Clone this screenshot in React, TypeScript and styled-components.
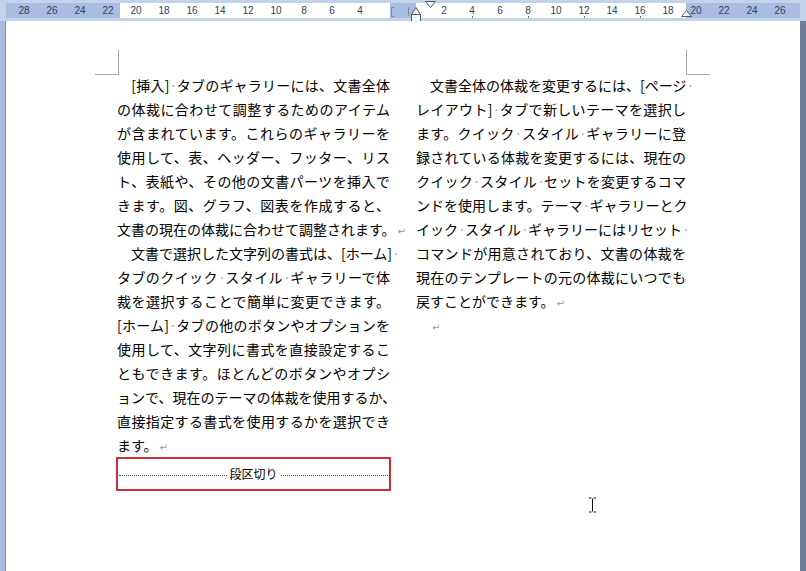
import styled, { createGlobalStyle } from "styled-components";

const GlobalStyle = createGlobalStyle`
  html, body {
    margin: 0;
    padding: 0;
  }
  body {
    width: 806px;
    height: 571px;
    overflow: hidden;
    background: #c4d3eb;
  }
`;

const Window = styled.div`
  width: 806px;
  height: 571px;
  display: flex;
  flex-direction: column;
  background: #c4d3eb;
`;

const RulerBar = styled.div`
  position: relative;
  height: 21px;
  padding: 3px 6px;
  box-sizing: border-box;
`;

const Band = styled.div`
  display: grid;
  height: 15px;
`;

const Segments = styled.div`
  grid-area: 1 / 1;
  display: flex;
`;

const Segment = styled.div<{ $w: number; $white?: boolean }>`
  width: ${(p) => p.$w}px;
  background: ${(p) => (p.$white ? "#ffffff" : "#a9bde2")};
`;

const Numbers = styled.div`
  grid-area: 1 / 1;
  display: flex;
  padding-left: 4px;
`;

const Num = styled.span<{ $tick?: boolean }>`
  position: relative;
  width: 28px;
  text-align: center;
  font: 10px/15px "Liberation Sans", Arial, sans-serif;
  color: #33425f;
  &::after {
    content: "";
    display: ${(p) => (p.$tick ? "block" : "none")};
    position: absolute;
    left: 14px;
    bottom: 0;
    width: 1px;
    height: 2px;
    background: #6a768c;
  }
`;

const Marker = styled.svg<{ $x: number; $y: number }>`
  position: absolute;
  left: ${(p) => p.$x}px;
  top: ${(p) => p.$y}px;
  overflow: visible;
`;

const Body = styled.div`
  flex: 1;
  display: flex;
`;

const LeftEdge = styled.div`
  width: 5px;
  background: #aabde1;
  border-right: 1px solid #7f8ea8;
`;

const RightEdge = styled.div`
  width: 6px;
  background: #6f7e98;
`;

const Page = styled.div`
  position: relative;
  flex: 1;
  background: #ffffff;
  padding: 52px 0 0 111px;
  box-sizing: border-box;
`;

const Corner = styled.div<{ $side: "left" | "right" }>`
  position: absolute;
  top: 29px;
  width: 23px;
  height: 24px;
  border-bottom: 1px solid #a8a8a8;
  ${(p) =>
    p.$side === "left"
      ? "left: 89px; border-right: 1px solid #a8a8a8;"
      : "left: 680px; border-left: 1px solid #a8a8a8;"}
`;

const Columns = styled.div`
  display: grid;
  grid-template-columns: 273px 270px;
  column-gap: 26px;
  align-items: start;
`;

const Column = styled.div`
  font-family: "Noto Sans CJK JP", "DejaVu Sans", sans-serif;
  font-size: 14px;
  color: #000;
`;

const Line = styled.div<{ $last?: boolean }>`
  height: 24px;
  line-height: 24px;
  white-space: nowrap;
  text-align: justify;
  text-align-last: ${(p) => (p.$last ? "left" : "justify")};
`;

const SpaceMark = styled.span`
  display: inline-block;
  width: 7px;
  text-align: center;
  color: #b4b4b4;
  &::before {
    content: "·";
  }
`;

const ParaMark = styled.span`
  margin-left: 2px;
  font-family: "DejaVu Sans", sans-serif;
  font-size: 10px;
  color: #9c9c9c;
`;

const BreakBox = styled.div`
  margin-left: -1px;
  width: 275px;
  height: 34px;
  box-sizing: border-box;
  border: 2px solid #c9303b;
  display: flex;
  align-items: center;
  padding: 0 1px;
`;

const Dots = styled.span`
  flex: 1;
  border-top: 1px dotted #555;
  margin-top: 2px;
`;

const BreakLabel = styled.span`
  font-family: "Noto Sans CJK JP", sans-serif;
  font-size: 12px;
  line-height: 14px;
  padding: 0 3px;
`;

const Cursor = styled.svg`
  position: absolute;
  left: 582px;
  top: 476px;
`;

const leftLines = [
  "　[挿入]·タブのギャラリーには、文書全体",
  "の体裁に合わせて調整するためのアイテム",
  "が含まれています。これらのギャラリーを",
  "使用して、表、ヘッダー、フッター、リス",
  "ト、表紙や、その他の文書パーツを挿入で",
  "きます。図、グラフ、図表を作成すると、",
  "文書の現在の体裁に合わせて調整されます。↵",
  "　文書で選択した文字列の書式は、[ホーム]·",
  "タブのクイック·スタイル·ギャラリーで体",
  "裁を選択することで簡単に変更できます。",
  "[ホーム]·タブの他のボタンやオプションを",
  "使用して、文字列に書式を直接設定するこ",
  "ともできます。ほとんどのボタンやオプシ",
  "ョンで、現在のテーマの体裁を使用するか、",
  "直接指定する書式を使用するかを選択でき",
  "ます。↵",
];

const rightLines = [
  "　文書全体の体裁を変更するには、[ページ·",
  "レイアウト]·タブで新しいテーマを選択し",
  "ます。クイック·スタイル·ギャラリーに登",
  "録されている体裁を変更するには、現在の",
  "クイック·スタイル·セットを変更するコマ",
  "ンドを使用します。テーマ·ギャラリーとク",
  "イック·スタイル·ギャラリーにはリセット·",
  "コマンドが用意されており、文書の体裁を",
  "現在のテンプレートの元の体裁にいつでも",
  "戻すことができます。↵",
  "　↵",
];

const rulerNums = [
  "28", "26", "24", "22", "20", "18", "16", "14", "12", "10", "8", "6", "4",
  "", "",
  "2", "4", "6", "8", "10", "12", "14", "16", "18", "20", "22", "24", "26",
];

function renderLine(text: string, i: number) {
  const last = text.endsWith("↵");
  const body = last ? text.slice(0, -1) : text;
  const parts = body.split("·");
  return (
    <Line key={i} $last={last}>
      {parts.map((p, j) => (
        <span key={j}>
          {p}
          {j < parts.length - 1 && <SpaceMark />}
        </span>
      ))}
      {last && <ParaMark>↵</ParaMark>}
    </Line>
  );
}

function Ruler() {
  return (
    <RulerBar>
      <Band>
        <Segments>
          <Segment $w={114} />
          <Segment $w={270} $white />
          <Segment $w={26} />
          <Segment $w={270} $white />
          <Segment $w={114} />
        </Segments>
        <Numbers>
          {rulerNums.map((n, i) => (
            <Num key={i} $tick={i > 14 && i < 24 && ["4", "8", "12", "16"].includes(n)}>
              {n}
            </Num>
          ))}
        </Numbers>
      </Band>
      <Marker $x={390} $y={6} width="6" height="12">
        <path d="M4.5 1.5 H1.5 V10.5 H4.5" fill="none" stroke="#8a8a8a" />
      </Marker>
      <Marker $x={408} $y={6} width="14" height="17">
        <path d="M1.5 1.5 H0.5 V9.5 H1.5" fill="none" stroke="#8a8a8a" />
        <path d="M3.5 8.5 L8 1.5 L12.5 8.5 Z" fill="#f2f5fb" stroke="#5a5a5a" />
        <rect x="3.5" y="8.5" width="9" height="7" fill="#f2f5fb" stroke="#5a5a5a" />
      </Marker>
      <Marker $x={424} $y={0} width="13" height="9">
        <path d="M1.5 1.5 H11.5 L6.5 7.5 Z" fill="#f2f5fb" stroke="#5a5a5a" />
      </Marker>
      <Marker $x={680} $y={9} width="13" height="9">
        <path d="M1.5 7.5 L6.5 1.5 L11.5 7.5 Z" fill="#f2f5fb" stroke="#5a5a5a" />
      </Marker>
    </RulerBar>
  );
}

export default function App() {
  return (
    <Window>
      <GlobalStyle />
      <Ruler />
      <Body>
        <LeftEdge />
        <Page>
          <Corner $side="left" />
          <Corner $side="right" />
          <Columns>
            <Column>
              {leftLines.map(renderLine)}
              <BreakBox>
                <Dots />
                <BreakLabel>段区切り</BreakLabel>
                <Dots />
              </BreakBox>
            </Column>
            <Column>{rightLines.map(renderLine)}</Column>
          </Columns>
          <Cursor width="9" height="16" viewBox="0 0 9 16">
            <path d="M1 1 H3.5 M5.5 1 H8 M4.5 1.5 V14.5 M1 15 H3.5 M5.5 15 H8" stroke="#111" strokeWidth="1" fill="none" />
          </Cursor>
        </Page>
        <RightEdge />
      </Body>
    </Window>
  );
}
